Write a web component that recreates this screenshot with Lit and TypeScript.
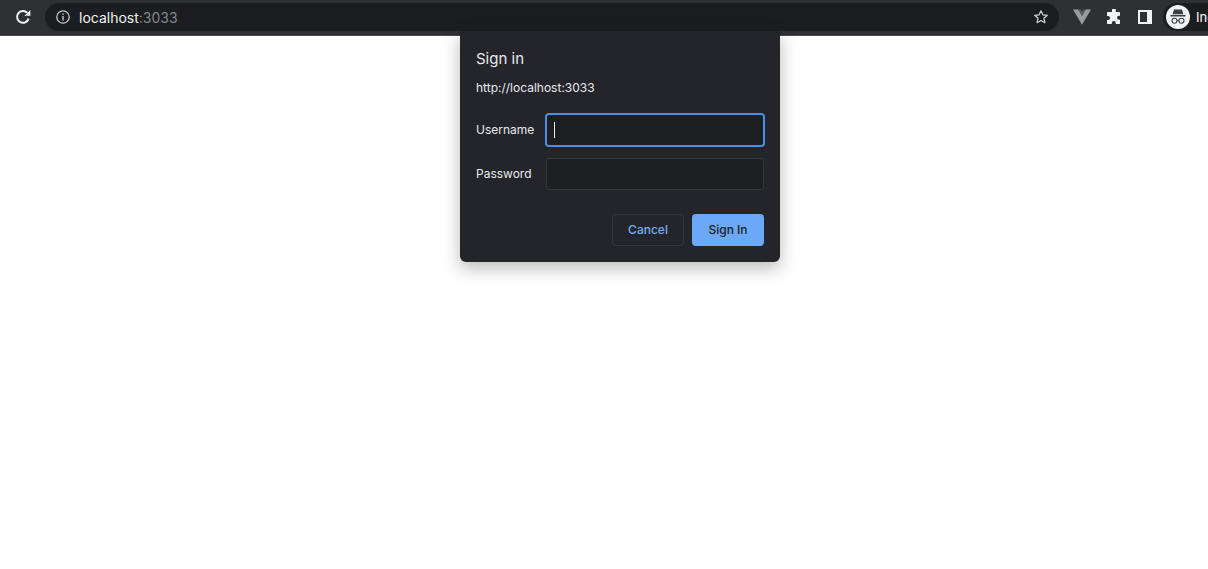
import { LitElement, html, css } from "lit";
import { customElement } from "lit/decorators.js";

@customElement("app-root")
export class AppRoot extends LitElement {
  static styles = css`
    :host { display: block; position: relative; width: 1208px; height: 569px; overflow: hidden; background: #fff; font-family: Inter, "Liberation Sans", sans-serif; }
    .toolbar { height: 36px; box-sizing: border-box; background: #2f3034; border-bottom: 1px solid #4a4b4e; display: flex; align-items: flex-start; padding-top: 3px; }
    .reload { width: 16px; height: 16px; margin: 6px 14px 0 15px; flex: none; color: #f1f3f4; }
    .omni { width: 1014px; height: 28px; flex: none; box-sizing: border-box; background: #1c1d20; border-radius: 14px; display: flex; align-items: center; padding: 0 10px; color: #fff; font-size: 14px; }
    .info { width: 16px; height: 16px; margin-right: 8px; flex: none; }
    .host { color: #f1f3f4; }
    .port { color: #85878a; }
    .spacer { flex: 1; }
    .star { width: 16px; height: 16px; }
    .tools { display: flex; align-items: center; height: 28px; margin-left: 14px; flex: 1; min-width: 0; }
    .t { flex: none; display: block; }
    .vue { width: 18px; height: 16px; }
    .puzzle { width: 16px; height: 16px; margin-left: 15px; }
    .panel { width: 14px; height: 14px; margin-left: 16px; }
    .pill { display: flex; align-items: center; flex: 1; min-width: 0; height: 28px; margin-left: 11px; padding-left: 3px; background: #1c1d20; border-radius: 14px 0 0 14px; }
    .profile { width: 24px; height: 24px; }
    .chip { margin-left: 6px; font-size: 13px; color: #fff; overflow: hidden; white-space: nowrap; }
    .dialog { position: absolute; left: 460px; top: 31px; width: 320px; height: 231px; box-sizing: border-box; background: #24252a; border-radius: 0 0 6px 6px; box-shadow: 0 6px 18px rgba(0,0,0,.28); padding: 18px 16px 16px; color: #e8eaed; display: flex; flex-direction: column; font-size: 12px; }
    .title { font-size: 15px; line-height: 20px; }
    .url { line-height: 16px; margin-top: 11px; }
    .row { display: flex; align-items: center; height: 32px; }
    .row.first { margin-top: 18px; }
    .row.second { margin-top: 12px; }
    .label { width: 70px; flex: none; padding-bottom: 2px; }
    .field { flex: 1; height: 32px; box-sizing: border-box; background: #1d1e21; border: 1px solid #36373b; border-radius: 3px; display: flex; align-items: center; padding-left: 7px; }
    .field.focus { border-color: #4a90e8; box-shadow: 0 0 0 1px #4a90e8; }
    .caret { width: 1px; height: 16px; background: #e8eaed; }
    .actions { display: flex; justify-content: flex-end; gap: 8px; margin-top: 24px; }
    .btn { width: 72px; height: 32px; box-sizing: border-box; border-radius: 4px; display: flex; align-items: center; justify-content: center; font-weight: 500; padding-bottom: 1px; }
    .cancel { border: 1px solid #36373b; color: #74aef7; }
    .ok { background: #6ba8f5; color: #1f2024; }
  `;

  render() {
    return html`
      <div class="toolbar">
        <svg class="reload" viewBox="0 0 16 16"><path fill="none" stroke="currentColor" stroke-width="2" d="M13.6 9.600A5.900 5.900 0 1 1 12.200 3.800"/><path fill="currentColor" d="M9.400 6.800h6V1z"/></svg>
        <div class="omni">
          <svg class="info" viewBox="0 0 16 16"><circle cx="8" cy="8" r="6.200" fill="none" stroke="#c4c7ca" stroke-width="1.300"/><path fill="#c4c7ca" d="M7.300 7h1.400v4.400H7.300zM7.300 4.600h1.400V6H7.300z"/></svg>
          <span><span class="host">localhost</span><span class="port">:3033</span></span>
          <div class="spacer"></div>
          <svg class="star" viewBox="0 0 16 16"><path fill="none" stroke="#d5d7da" stroke-width="1.200" stroke-linejoin="round" d="M8 1.800l1.900 4 4.400.5-3.300 3 .9 4.400L8 11.500l-3.900 2.200.9-4.400-3.300-3 4.400-.5z"/></svg>
        </div>
        <div class="tools">
          <svg class="t vue" viewBox="0 0 18 16"><path fill="#9a9b9d" d="M0 .5h5.200L9 7l3.800-6.500H18L9 15.800z"/><path fill="#626367" d="M5.200.5h2.300L9 3.200 10.500.5h2.300L9 7z"/></svg>
          <svg class="t puzzle" viewBox="0 0 16 16"><path fill="#f1f3f4" d="M6 1.200a1.900 1.900 0 0 1 3.800 0V3h3.400a.8.800 0 0 1 .8.800v3h-1a2 2 0 0 0 0 4h1v3.400a.8.800 0 0 1-.8.800h-3.400v-1.100a2 2 0 0 0-4 0V15H1.800a.8.800 0 0 1-.8-.8v-3.100h1a2.100 2.100 0 0 0 0-4.200H1V3.800A.8.800 0 0 1 1.800 3H6z"/></svg>
          <svg class="t panel" viewBox="0 0 14 14"><path fill="#f1f3f4" fill-rule="evenodd" d="M0 0h14v14H0zM2 2v10h7V2z"/></svg>
          <div class="pill">
            <svg class="t profile" viewBox="0 0 24 24"><circle cx="12" cy="12" r="12" fill="#f1f3f4"/><path fill="#3c3d40" d="M8 4.500h8l1.400 4.800H6.600z"/><path fill="#3c3d40" d="M4.500 10h15v1.500h-15z"/><g fill="none" stroke="#3c3d40" stroke-width="1.100"><circle cx="8.500" cy="15.800" r="2.500"/><circle cx="15.500" cy="15.800" r="2.500"/><path d="M11 15.500h2"/></g></svg>
            <div class="chip">Incognito</div>
          </div>
        </div>
      </div>
      <div class="dialog">
        <div class="title">Sign in</div>
        <div class="url">http://localhost:3033</div>
        <div class="row first"><div class="label">Username</div><div class="field focus"><div class="caret"></div></div></div>
        <div class="row second"><div class="label">Password</div><div class="field"></div></div>
        <div class="actions"><div class="btn cancel">Cancel</div><div class="btn ok">Sign In</div></div>
      </div>
    `;
  }
}
